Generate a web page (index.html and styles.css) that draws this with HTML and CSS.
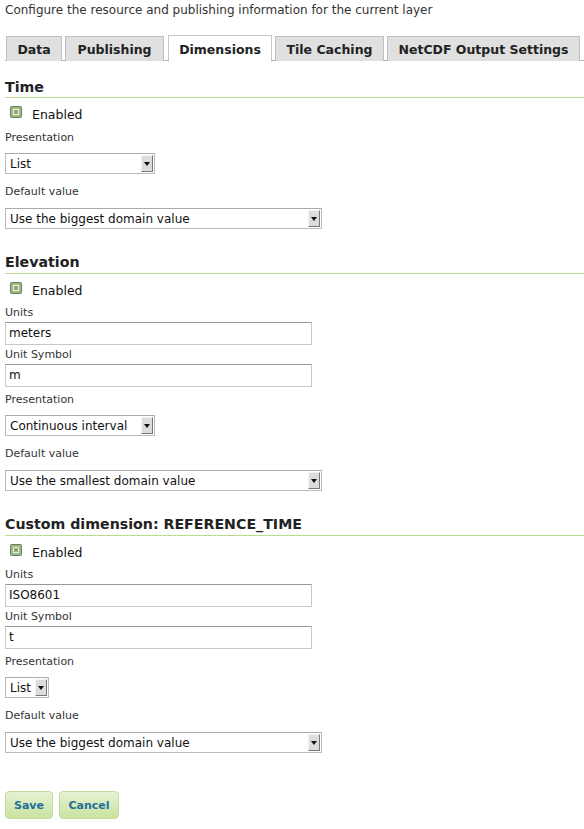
FILE: index.html
```html
<!DOCTYPE html>
<html>
<head>
<meta charset="utf-8">
<link rel="stylesheet" href="styles.css">
</head>
<body>
<div class="page">
  <p class="intro">Configure the resource and publishing information for the current layer</p>
  <div class="tabs">
    <div class="tab t-data">Data</div>
    <div class="tab t-pub">Publishing</div>
    <div class="tab active t-dim">Dimensions</div>
    <div class="tab t-tile">Tile Caching</div>
    <div class="tab t-net">NetCDF Output Settings</div>
  </div>

  <section class="dim first">
    <h2>Time</h2>
    <div class="check"><span class="box"><svg width="12" height="12" viewBox="0 0 12 12"><rect x="0.5" y="0.5" width="11" height="11" rx="1" fill="#9dbb82" stroke="#6b7d5e"/><rect x="3" y="3" width="6" height="6" fill="#e6efdd"/><path d="M4.2 4.2 L7.8 7.8 M7.8 4.2 L4.2 7.8" stroke="#6f8f57" stroke-width="1.3"/></svg></span>Enabled</div>
    <div class="label sp">Presentation</div>
    <div class="select w150"><span>List</span><i class="arr"></i></div>
    <div class="label sp2">Default value</div>
    <div class="select w317"><span>Use the biggest domain value</span><i class="arr"></i></div>
  </section>

  <section class="dim">
    <h2>Elevation</h2>
    <div class="check"><span class="box"><svg width="12" height="12" viewBox="0 0 12 12"><rect x="0.5" y="0.5" width="11" height="11" rx="1" fill="#9dbb82" stroke="#6b7d5e"/><rect x="3" y="3" width="6" height="6" fill="#e6efdd"/><path d="M4.2 4.2 L7.8 7.8 M7.8 4.2 L4.2 7.8" stroke="#6f8f57" stroke-width="1.3"/></svg></span>Enabled</div>
    <div class="label">Units</div>
    <div class="input">meters</div>
    <div class="label l2">Unit Symbol</div>
    <div class="input">m</div>
    <div class="label sp3">Presentation</div>
    <div class="select w150"><span>Continuous interval</span><i class="arr"></i></div>
    <div class="label sp2">Default value</div>
    <div class="select w317"><span>Use the smallest domain value</span><i class="arr"></i></div>
  </section>

  <section class="dim">
    <h2>Custom dimension: REFERENCE_TIME</h2>
    <div class="check"><span class="box"><svg width="12" height="12" viewBox="0 0 12 12"><rect x="0.5" y="0.5" width="11" height="11" rx="1" fill="#9dbb82" stroke="#6b7d5e"/><rect x="3" y="3" width="6" height="6" fill="#e6efdd"/><path d="M4.2 4.2 L7.8 7.8 M7.8 4.2 L4.2 7.8" stroke="#6f8f57" stroke-width="1.3"/></svg></span>Enabled</div>
    <div class="label">Units</div>
    <div class="input">ISO8601</div>
    <div class="label l2">Unit Symbol</div>
    <div class="input">t</div>
    <div class="label sp3">Presentation</div>
    <div class="select w44"><span>List</span><i class="arr"></i></div>
    <div class="label sp2">Default value</div>
    <div class="select w317"><span>Use the biggest domain value</span><i class="arr"></i></div>
  </section>

  <div class="buttons">
    <button class="btn">Save</button>
    <button class="btn">Cancel</button>
  </div>
</div>
</body>
</html>
```

FILE: styles.css
```css
* { box-sizing: border-box; }
html, body { margin: 0; padding: 0; background: #fff; }
body {
  font-family: "DejaVu Sans", "Liberation Sans", sans-serif;
  color: #222;
  width: 584px;
  overflow: hidden;
}
.page { padding: 0 0 0 5px; }
.intro {
  margin: 0;
  padding-top: 3px;
  font-size: 12px;
  line-height: 14px;
  color: #333;
}
.tabs {
  display: flex;
  margin-top: 18px;
  height: 26px;
  border-bottom: 1px solid #b0b0b0;
  padding-left: 1px;
}
.tab {
  margin-right: 3px;
  height: 25px;
  margin-top: 1px;
  background: #e0e0e0;
  border: 1px solid #c0c0c0;
  border-bottom: none;
  font-weight: bold;
  font-size: 12.5px;
  color: #222;
  display: flex;
  align-items: center;
  justify-content: center;
}
.t-data { width: 56px; }
.t-pub { width: 99px; margin-right: 4px; }
.t-dim { width: 104px; }
.t-tile { width: 109px; margin-right: 3px; }
.t-net { width: 193px; }
.tab.active {
  background: #fff;
  height: 27px;
  margin-top: 0;
  margin-bottom: -1px;
  border-color: #c8c8c8;
}
.dim h2 {
  margin: 0;
  font-size: 14.2px;
  font-weight: bold;
  color: #222;
  line-height: 18px;
  padding-top: 24px;
  padding-bottom: 2px;
  border-bottom: 1px solid #b9dc8d;
}
.dim.first h2 { padding-top: 17px; padding-bottom: 1px; }
.check {
  display: flex;
  align-items: center;
  font-size: 12.5px;
  color: #111;
  height: 20px;
  margin-top: 6px;
}
.box { width: 12px; height: 12px; margin-left: 5px; margin-right: 10px; margin-top: -5px; display: block; }
.box svg { display: block; }
.label {
  font-size: 11px;
  color: #333;
  line-height: 14px;
  margin-top: 6px;
  margin-bottom: 2px;
}
.label.l2 { margin-top: 3px; }
.label.sp { margin-top: 7px; margin-bottom: 8px; }
.label.sp2 { margin-top: 11px; margin-bottom: 9px; }
.label.sp3 { margin-top: 6px; margin-bottom: 8px; }
.input {
  width: 307px;
  height: 23px;
  border: 1px solid #c8c8c8;
  border-top-color: #999;
  font-size: 12px;
  line-height: 21px;
  padding-left: 3px;
  color: #111;
}
.select {
  height: 21px;
  border: 1px solid #bbb;
  border-top-color: #aaa;
  display: flex;
  align-items: center;
  font-size: 12px;
  color: #111;
  padding-left: 4px;
  background: #fff;
}
.select span { flex: 1; white-space: nowrap; }
.w150 { width: 150px; }
.w317 { width: 317px; }
.w44 { width: 44px; }
.arr {
  display: block;
  width: 12px;
  height: 17px;
  margin-right: 1px;
  background: #dcdcdc;
  border-top: 1px solid #f4f4f4;
  border-left: 1px solid #f4f4f4;
  border-right: 1px solid #777;
  border-bottom: 1px solid #777;
  position: relative;
}
.arr::after {
  content: "";
  position: absolute;
  left: 2px;
  top: 6px;
  border-left: 3px solid transparent;
  border-right: 3px solid transparent;
  border-top: 4px solid #111;
}
.buttons {
  display: flex;
  gap: 6px;
  margin-top: 38px;
}
.btn {
  height: 28px;
  border: 1px solid #c2dc9c;
  border-radius: 4px;
  background: linear-gradient(#e6f2d2, #c9e2a0);
  color: #1f6f9b;
  font-family: "DejaVu Sans", sans-serif;
  font-weight: bold;
  font-size: 11px;
  padding: 0;
}
.btn:first-child { width: 48px; }
.btn:last-child { width: 60px; }
```
